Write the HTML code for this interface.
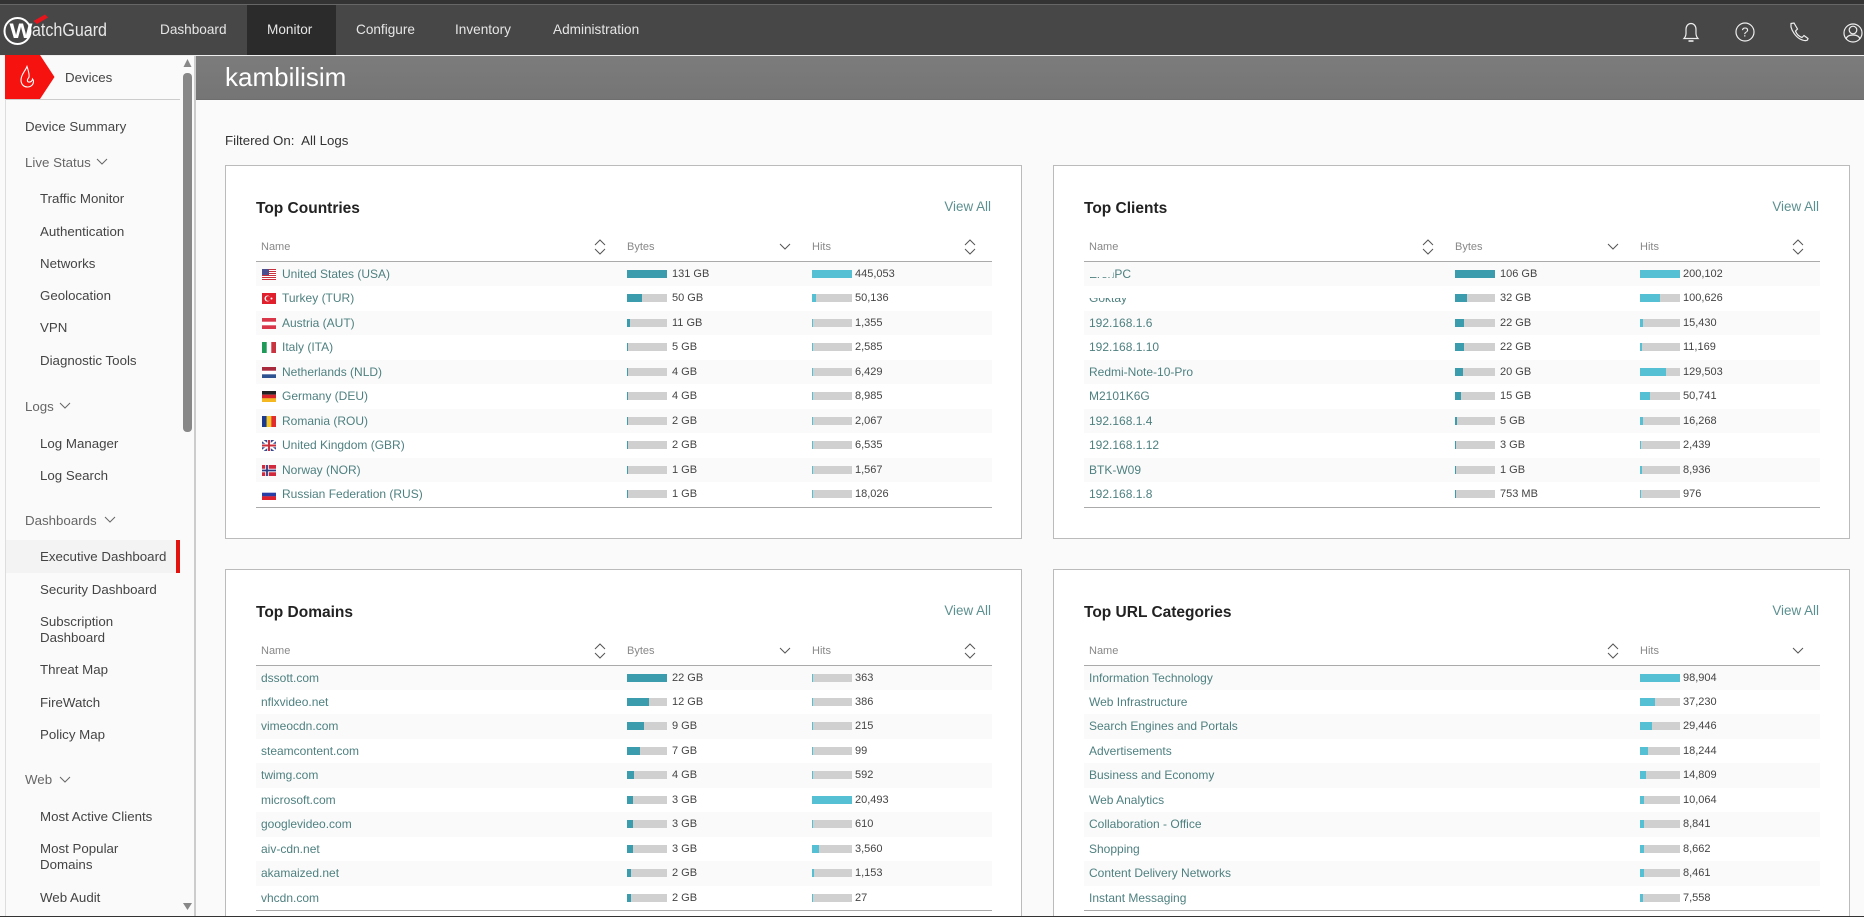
<!DOCTYPE html>
<html><head><meta charset="utf-8"><title>kambilisim</title>
<style>
*{box-sizing:border-box;margin:0;padding:0}
html,body{width:1864px;height:917px;overflow:hidden;background:#fafafa;font-family:"Liberation Sans",sans-serif;color:#444}
#w{position:absolute;left:0;top:0;width:1864px;height:917px;overflow:hidden;background:#fafafa}
#top{position:absolute;left:0;top:0;width:1864px;height:55px;background:#474747;border-top:4px solid #333}
#top:before{content:"";position:absolute;left:0;right:0;top:0;height:1px;background:#666}
#wl{position:absolute;left:0;top:55px;width:1864px;height:1px;background:#eee}
.nv{position:absolute;top:22px;line-height:16px;font-size:13.6px;color:#e6e6e6;white-space:nowrap}
#act{position:absolute;left:247px;top:5px;width:89px;height:50px;background:#2b2b2b}
#ban{position:absolute;left:195px;top:56px;width:1669px;height:44px;background:linear-gradient(#7c7c7c,#757575);border-bottom:1px solid #6e6e6e}
#ban span{position:absolute;left:30px;top:4px;font-size:26px;line-height:34px;color:#fff}
#side{position:absolute;left:5px;top:56px;width:191px;height:860px;background:#fafafa;border-left:1px solid #ddd;border-right:2px solid #ccc}
.s{position:absolute;font-size:13.3px;line-height:16px;color:#444;white-space:nowrap}
.h{color:#666}
#flt{position:absolute;left:225px;top:133px;font-size:13.3px;line-height:16px;color:#333;white-space:pre}
.c{position:absolute;background:#fff;border:1px solid #bbb;width:797px}
.c.c2{border-bottom:0}
.c h2{position:absolute;left:30px;top:34px;font-size:15.5px;line-height:18px;color:#222;font-weight:bold;white-space:nowrap}
.c u{position:absolute;right:30px;top:33px;text-decoration:none;font-size:13.4px;line-height:16px;color:#5c8f8f}
.t{position:absolute;left:30px;top:95px;width:736px;border-top:1px solid #aaa;border-bottom:1px solid #aaa}
.l{position:absolute;top:-22px;font-size:11px;line-height:14px;color:#888}
.t svg.so{position:absolute;top:-23px;width:12px;height:16px;fill:none;stroke:#555;stroke-width:1}
.r{position:relative;height:25px}
.r:nth-child(odd){background:#fafafa;height:24px}
.c2 .r{height:24px}
.c2 .r:nth-child(odd){height:25px}
.c2 .r.a:nth-child(odd){height:24px}
.r a{position:absolute;left:5px;top:0;font-size:12px;line-height:24px;color:#4f8080;white-space:nowrap}
.r.f a{left:26px}
.r em{position:absolute;left:6px;top:7px;width:14px;height:11px;display:block;overflow:hidden}
.r em svg{display:block;width:14px;height:11px}
.r i{position:absolute;top:8px;width:40px;height:8px;background:#d0d0d0;display:block}
.r i s{display:block;height:8px;background:#3a9cad}
.r i+b+i s,.r.u i s{background:#55c0d4}
.r b{position:absolute;top:0;font-weight:normal;font-size:11px;line-height:24px;color:#444;white-space:nowrap}
.r i:nth-of-type(1){left:371px}.r b:nth-of-type(1){left:416px}
.r i:nth-of-type(2){left:556px}.r b:nth-of-type(2){left:599px}
.r.u i:nth-of-type(1){left:556px}.r.u b:nth-of-type(1){left:599px}
.p{position:absolute}
</style></head><body><div id="w">
<div id="top"></div><div id="wl"></div><div id="act"></div>
<svg class="p" style="left:0;top:6px" width="125" height="48" viewBox="0 6 125 48">
<circle cx="17.5" cy="31" r="13" fill="none" stroke="#fff" stroke-width="2"/>
<path d="M33.500 21 L45 14.500 L48 17.500 L37 24 Z" fill="#e8141c"/>
<text x="9.500" y="38" font-family="Liberation Sans" font-weight="bold" font-size="21" fill="#fff" textLength="23" lengthAdjust="spacingAndGlyphs">W</text>
<text x="32" y="36" font-family="Liberation Sans" font-size="18" fill="#e8e8e8" textLength="75" lengthAdjust="spacingAndGlyphs">atchGuard</text>
</svg>
<div class="nv" style="left:160px">Dashboard</div><div class="nv" style="left:267px">Monitor</div><div class="nv" style="left:356px">Configure</div><div class="nv" style="left:455px">Inventory</div><div class="nv" style="left:553px">Administration</div>
<svg class="p" style="left:1680px;top:20px" width="184" height="26" viewBox="1680 20 184 26" fill="none" stroke="#eee" stroke-width="1.2">
<path d="M1684 38.500 C1686.500 36 1686 33 1686 29.500 C1686 26 1688 23.500 1691 23.500 C1694 23.500 1696 26 1696 29.500 C1696 33 1695.500 36 1698 38.500 Z"/><path d="M1688.500 41 H1693.500" stroke-width="1.600"/>
<circle cx="1745" cy="32" r="9"/><text x="1745" y="36.500" text-anchor="middle" font-family="Liberation Sans" font-size="13" fill="#eee" stroke="none">?</text>
<path d="M1791 23.500 L1794 23 L1797.500 29 L1795.500 31 C1796.500 34 1799 36.500 1802 37.500 L1804 35.500 L1808 38.500 L1807.500 40 C1806 41 1803 40.500 1800 39 C1795.500 36.500 1792 31 1791 27 Z"/>
<circle cx="1853" cy="33" r="9"/><circle cx="1853" cy="30" r="3.800"/><path d="M1846 39 C1847 35.500 1850 35 1853 35 C1856 35 1859 35.500 1860 39"/>
</svg>
<div id="ban"><span>kambilisim</span></div>
<div id="side"></div>
<svg class="p" style="left:5px;top:55px" width="52" height="45" viewBox="5 55 52 45"><path d="M5 55 H40 L54.500 77 L40 99 H5 Z" fill="#f5120f"/><path d="M27 66.500 C25 71.500 21 74.500 21 80 C21 84.500 24 87 27.500 87 C31 87 33.500 84.500 33.500 81.500 C33.500 80.500 33 79.500 32.500 79 C32.500 81 30.500 82.500 28.500 82 C27 81.500 27 79.500 28.500 78 C30 76.500 28.500 71 27 66.500 Z" fill="none" stroke="#fff" stroke-width="1.100"/></svg>
<div class="p" style="left:6px;top:99px;width:174px;height:1px;background:#ccc"></div>
<div class="s" style="left:65px;top:70px">Devices</div>
<svg class="p" style="left:182px;top:58px" width="12" height="856" viewBox="0 0 12 856"><path d="M1.500 9 L5.500 1 L9.500 9 Z" fill="#888"/><rect x="1" y="15" width="9" height="359" rx="4" fill="#888"/><path d="M1 845 H10 L5.500 852 Z" fill="#888"/></svg>
<div class="p" style="left:6px;top:540px;width:170px;height:33px;background:#f3f3f3"></div>
<div class="p" style="left:176px;top:540px;width:4px;height:33px;background:#e2120f"></div>
<div class="s" style="left:25px;top:119px">Device Summary</div>
<div class="s h" style="left:25px;top:155px">Live Status</div>
<div class="s" style="left:40px;top:191px">Traffic Monitor</div>
<div class="s" style="left:40px;top:224px">Authentication</div>
<div class="s" style="left:40px;top:256px">Networks</div>
<div class="s" style="left:40px;top:288px">Geolocation</div>
<div class="s" style="left:40px;top:320px">VPN</div>
<div class="s" style="left:40px;top:353px">Diagnostic Tools</div>
<div class="s h" style="left:25px;top:399px">Logs</div>
<div class="s" style="left:40px;top:436px">Log Manager</div>
<div class="s" style="left:40px;top:468px">Log Search</div>
<div class="s h" style="left:25px;top:513px">Dashboards</div>
<div class="s" style="left:40px;top:549px">Executive Dashboard</div>
<div class="s" style="left:40px;top:582px">Security Dashboard</div>
<div class="s" style="left:40px;top:614px">Subscription<br>Dashboard</div>
<div class="s" style="left:40px;top:662px">Threat Map</div>
<div class="s" style="left:40px;top:695px">FireWatch</div>
<div class="s" style="left:40px;top:727px">Policy Map</div>
<div class="s h" style="left:25px;top:772px">Web</div>
<div class="s" style="left:40px;top:809px">Most Active Clients</div>
<div class="s" style="left:40px;top:841px">Most Popular<br>Domains</div>
<div class="s" style="left:40px;top:890px">Web Audit</div>
<svg class="p" style="left:0;top:0" width="200" height="800" fill="none" stroke="#666" stroke-width="1"><path d="M97 159 L102 164 L107 159"/><path d="M60 403 L65 408 L70 403"/><path d="M105 517 L110 522 L115 517"/><path d="M60 777 L65 782 L70 777"/></svg>
<div id="flt">Filtered On:  All Logs</div>

<div class="c" style="left:225px;top:165px;height:374px">
<h2>Top Countries</h2><u>View All</u>
<div class="t">
<span class="l" style="left:5px">Name</span><span class="l" style="left:371px">Bytes</span><span class="l" style="left:556px">Hits</span>
<svg class="so" style="left:338px" viewBox="0 0 12 16"><path d="M1 6 L6 1 L11 6M1 10 L6 15 L11 10"/></svg>
<svg class="so" style="left:523px" viewBox="0 0 12 16"><path d="M1 5 L6 10 L11 5"/></svg>
<svg class="so" style="left:708px" viewBox="0 0 12 16"><path d="M1 6 L6 1 L11 6M1 10 L6 15 L11 10"/></svg>
<div class="r f"><em><svg viewBox="0 0 14 11"><rect width="14" height="11" fill="#fff"/><path d="M0 .5H14M0 2.500H14M0 4.500H14M0 6.500H14M0 8.500H14M0 10.500H14" stroke="#c8303c"/><rect width="7" height="6" fill="#4a4f90"/></svg></em><a>United States (USA)</a><i><s style="width:40px"></s></i><b>131 GB</b><i><s style="width:40px"></s></i><b>445,053</b></div>
<div class="r f"><em><svg viewBox="0 0 14 11"><rect width="14" height="11" fill="#e0202c"/><circle cx="5.500" cy="5.500" r="3" fill="#fff"/><circle cx="6.300" cy="5.500" r="2.400" fill="#e0202c"/><circle cx="9.500" cy="5.500" r="1" fill="#fff"/></svg></em><a>Turkey (TUR)</a><i><s style="width:15px"></s></i><b>50 GB</b><i><s style="width:4px"></s></i><b>50,136</b></div>
<div class="r f"><em><svg viewBox="0 0 14 11"><rect width="14" height="11" fill="#fff"/><rect width="14" height="3.700" fill="#d9364a"/><rect y="7.300" width="14" height="3.700" fill="#d9364a"/></svg></em><a>Austria (AUT)</a><i><s style="width:3px"></s></i><b>11 GB</b><i><s style="width:1px"></s></i><b>1,355</b></div>
<div class="r f"><em><svg viewBox="0 0 14 11"><rect width="14" height="11" fill="#fff"/><rect width="4.700" height="11" fill="#1f9a58"/><rect x="9.300" width="4.700" height="11" fill="#c83440"/></svg></em><a>Italy (ITA)</a><i><s style="width:1px"></s></i><b>5 GB</b><i><s style="width:1px"></s></i><b>2,585</b></div>
<div class="r f"><em><svg viewBox="0 0 14 11"><rect width="14" height="11" fill="#fff"/><rect width="14" height="3.700" fill="#a8283c"/><rect y="7.300" width="14" height="3.700" fill="#2f5290"/></svg></em><a>Netherlands (NLD)</a><i><s style="width:1px"></s></i><b>4 GB</b><i><s style="width:1px"></s></i><b>6,429</b></div>
<div class="r f"><em><svg viewBox="0 0 14 11"><rect width="14" height="3.700" fill="#222"/><rect y="3.700" width="14" height="3.700" fill="#d8232a"/><rect y="7.300" width="14" height="3.700" fill="#f6b820"/></svg></em><a>Germany (DEU)</a><i><s style="width:1px"></s></i><b>4 GB</b><i><s style="width:1px"></s></i><b>8,985</b></div>
<div class="r f"><em><svg viewBox="0 0 14 11"><rect width="4.700" height="11" fill="#1c3a8c"/><rect x="4.700" width="4.600" height="11" fill="#f6c820"/><rect x="9.300" width="4.700" height="11" fill="#e02c2c"/></svg></em><a>Romania (ROU)</a><i><s style="width:1px"></s></i><b>2 GB</b><i><s style="width:1px"></s></i><b>2,067</b></div>
<div class="r f"><em><svg viewBox="0 0 14 11"><rect width="14" height="11" fill="#3a4a8c"/><path d="M0 0L14 11M14 0L0 11" stroke="#fff" stroke-width="2"/><path d="M7 0V11M0 5.500H14" stroke="#fff" stroke-width="3.500"/><path d="M7 0V11M0 5.500H14" stroke="#c8303c" stroke-width="2"/></svg></em><a>United Kingdom (GBR)</a><i><s style="width:1px"></s></i><b>2 GB</b><i><s style="width:1px"></s></i><b>6,535</b></div>
<div class="r f"><em><svg viewBox="0 0 14 11"><rect width="14" height="11" fill="#d0283c"/><path d="M5 0V11M0 5.500H14" stroke="#fff" stroke-width="3.500"/><path d="M5 0V11M0 5.500H14" stroke="#2a3a80" stroke-width="1.800"/></svg></em><a>Norway (NOR)</a><i><s style="width:1px"></s></i><b>1 GB</b><i><s style="width:1px"></s></i><b>1,567</b></div>
<div class="r f"><em><svg viewBox="0 0 14 11"><rect width="14" height="11" fill="#fff"/><rect y="3.700" width="14" height="3.700" fill="#2a3ea8"/><rect y="7.300" width="14" height="3.700" fill="#e0202c"/></svg></em><a>Russian Federation (RUS)</a><i><s style="width:1px"></s></i><b>1 GB</b><i><s style="width:1px"></s></i><b>18,026</b></div>
</div></div>

<div class="c" style="left:1053px;top:165px;height:374px">
<h2>Top Clients</h2><u>View All</u>
<div class="t">
<span class="l" style="left:5px">Name</span><span class="l" style="left:371px">Bytes</span><span class="l" style="left:556px">Hits</span>
<svg class="so" style="left:338px" viewBox="0 0 12 16"><path d="M1 6 L6 1 L11 6M1 10 L6 15 L11 10"/></svg>
<svg class="so" style="left:523px" viewBox="0 0 12 16"><path d="M1 5 L6 10 L11 5"/></svg>
<svg class="so" style="left:708px" viewBox="0 0 12 16"><path d="M1 6 L6 1 L11 6M1 10 L6 15 L11 10"/></svg>
<div class="r"><a>ErenPC</a><i><s style="width:40px"></s></i><b>106 GB</b><i><s style="width:40px"></s></i><b>200,102</b></div>
<div class="r"><a>Goktay</a><i><s style="width:12px"></s></i><b>32 GB</b><i><s style="width:20px"></s></i><b>100,626</b></div>
<div class="r"><a>192.168.1.6</a><i><s style="width:9px"></s></i><b>22 GB</b><i><s style="width:3px"></s></i><b>15,430</b></div>
<div class="r"><a>192.168.1.10</a><i><s style="width:9px"></s></i><b>22 GB</b><i><s style="width:2px"></s></i><b>11,169</b></div>
<div class="r"><a>Redmi-Note-10-Pro</a><i><s style="width:8px"></s></i><b>20 GB</b><i><s style="width:26px"></s></i><b>129,503</b></div>
<div class="r"><a>M2101K6G</a><i><s style="width:6px"></s></i><b>15 GB</b><i><s style="width:10px"></s></i><b>50,741</b></div>
<div class="r"><a>192.168.1.4</a><i><s style="width:2px"></s></i><b>5 GB</b><i><s style="width:3px"></s></i><b>16,268</b></div>
<div class="r"><a>192.168.1.12</a><i><s style="width:1px"></s></i><b>3 GB</b><i><s style="width:1px"></s></i><b>2,439</b></div>
<div class="r"><a>BTK-W09</a><i><s style="width:1px"></s></i><b>1 GB</b><i><s style="width:2px"></s></i><b>8,936</b></div>
<div class="r"><a>192.168.1.8</a><i><s style="width:1px"></s></i><b>753 MB</b><i><s style="width:1px"></s></i><b>976</b></div>
</div>
<div class="p" style="left:35px;top:98px;width:24px;height:13px;background:#fafafa"></div>
<div class="p" style="left:31px;top:120px;width:50px;height:12px;background:#fff"></div>
</div>

<div class="c c2" style="left:225px;top:569px;height:348px">
<h2>Top Domains</h2><u>View All</u>
<div class="t">
<span class="l" style="left:5px">Name</span><span class="l" style="left:371px">Bytes</span><span class="l" style="left:556px">Hits</span>
<svg class="so" style="left:338px" viewBox="0 0 12 16"><path d="M1 6 L6 1 L11 6M1 10 L6 15 L11 10"/></svg>
<svg class="so" style="left:523px" viewBox="0 0 12 16"><path d="M1 5 L6 10 L11 5"/></svg>
<svg class="so" style="left:708px" viewBox="0 0 12 16"><path d="M1 6 L6 1 L11 6M1 10 L6 15 L11 10"/></svg>
<div class="r a"><a>dssott.com</a><i><s style="width:40px"></s></i><b>22 GB</b><i><s style="width:1px"></s></i><b>363</b></div>
<div class="r"><a>nflxvideo.net</a><i><s style="width:22px"></s></i><b>12 GB</b><i><s style="width:1px"></s></i><b>386</b></div>
<div class="r"><a>vimeocdn.com</a><i><s style="width:17px"></s></i><b>9 GB</b><i><s style="width:1px"></s></i><b>215</b></div>
<div class="r"><a>steamcontent.com</a><i><s style="width:13px"></s></i><b>7 GB</b><i><s style="width:1px"></s></i><b>99</b></div>
<div class="r"><a>twimg.com</a><i><s style="width:7px"></s></i><b>4 GB</b><i><s style="width:1px"></s></i><b>592</b></div>
<div class="r"><a>microsoft.com</a><i><s style="width:6px"></s></i><b>3 GB</b><i><s style="width:40px"></s></i><b>20,493</b></div>
<div class="r"><a>googlevideo.com</a><i><s style="width:6px"></s></i><b>3 GB</b><i><s style="width:1px"></s></i><b>610</b></div>
<div class="r"><a>aiv-cdn.net</a><i><s style="width:6px"></s></i><b>3 GB</b><i><s style="width:7px"></s></i><b>3,560</b></div>
<div class="r"><a>akamaized.net</a><i><s style="width:4px"></s></i><b>2 GB</b><i><s style="width:2px"></s></i><b>1,153</b></div>
<div class="r"><a>vhcdn.com</a><i><s style="width:4px"></s></i><b>2 GB</b><i><s style="width:1px"></s></i><b>27</b></div>
</div></div>

<div class="c c2" style="left:1053px;top:569px;height:348px">
<h2>Top URL Categories</h2><u>View All</u>
<div class="t">
<span class="l" style="left:5px">Name</span><span class="l" style="left:556px">Hits</span>
<svg class="so" style="left:523px" viewBox="0 0 12 16"><path d="M1 6 L6 1 L11 6M1 10 L6 15 L11 10"/></svg>
<svg class="so" style="left:708px" viewBox="0 0 12 16"><path d="M1 5 L6 10 L11 5"/></svg>
<div class="r u a"><a>Information Technology</a><i><s style="width:40px"></s></i><b>98,904</b></div>
<div class="r u"><a>Web Infrastructure</a><i><s style="width:15px"></s></i><b>37,230</b></div>
<div class="r u"><a>Search Engines and Portals</a><i><s style="width:12px"></s></i><b>29,446</b></div>
<div class="r u"><a>Advertisements</a><i><s style="width:8px"></s></i><b>18,244</b></div>
<div class="r u"><a>Business and Economy</a><i><s style="width:6px"></s></i><b>14,809</b></div>
<div class="r u"><a>Web Analytics</a><i><s style="width:4px"></s></i><b>10,064</b></div>
<div class="r u"><a>Collaboration - Office</a><i><s style="width:4px"></s></i><b>8,841</b></div>
<div class="r u"><a>Shopping</a><i><s style="width:4px"></s></i><b>8,662</b></div>
<div class="r u"><a>Content Delivery Networks</a><i><s style="width:4px"></s></i><b>8,461</b></div>
<div class="r u"><a>Instant Messaging</a><i><s style="width:3px"></s></i><b>7,558</b></div>
</div></div>

<div class="p" style="left:0;top:916px;width:1864px;height:1px;background:#333"></div>
</div></body></html>
